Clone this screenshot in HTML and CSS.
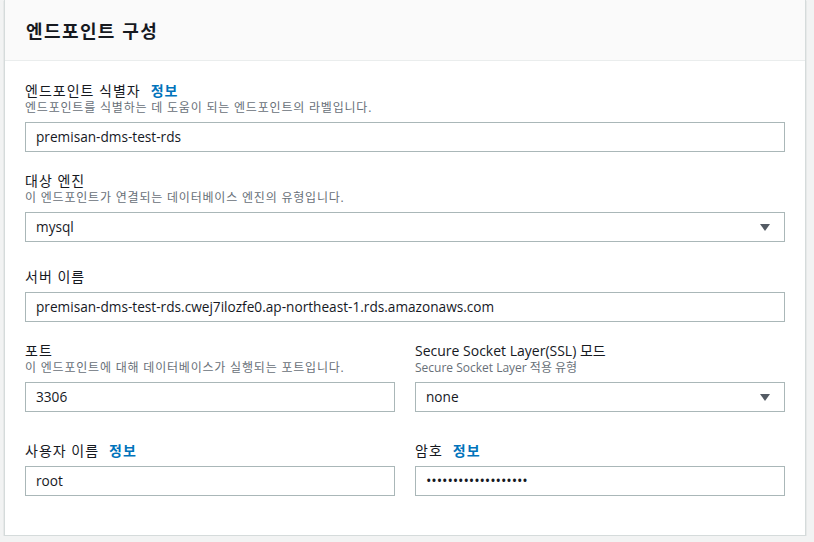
FILE: index.html
```html
<!DOCTYPE html>
<html lang="ko">
<head>
<meta charset="utf-8">
<link rel="stylesheet" href="styles.css">
</head>
<body>
<div class="card">
  <div class="card-header">
    <h2 class="title">엔드포인트 구성</h2>
  </div>
  <div class="card-body">
    <div class="field f1">
      <div class="label"><span class="ko">엔드포인트 식별자</span><a class="info">정보</a></div>
      <div class="desc ko">엔드포인트를 식별하는 데 도움이 되는 엔드포인트의 라벨입니다.</div>
      <div class="input">premisan-dms-test-rds</div>
    </div>
    <div class="field f2">
      <div class="label"><span class="ko">대상 엔진</span></div>
      <div class="desc ko">이 엔드포인트가 연결되는 데이터베이스 엔진의 유형입니다.</div>
      <div class="input select">mysql<span class="caret"></span></div>
    </div>
    <div class="field f3">
      <div class="label"><span class="ko">서버 이름</span></div>
      <div class="input">premisan-dms-test-rds.cwej7ilozfe0.ap-northeast-1.rds.amazonaws.com</div>
    </div>
    <div class="row r1">
      <div class="field">
        <div class="label"><span class="ko">포트</span></div>
        <div class="desc ko">이 엔드포인트에 대해 데이터베이스가 실행되는 포트입니다.</div>
        <div class="input">3306</div>
      </div>
      <div class="field">
        <div class="label">Secure Socket Layer(SSL) 모드</div>
        <div class="desc">Secure Socket Layer 적용 유형</div>
        <div class="input select">none<span class="caret"></span></div>
      </div>
    </div>
    <div class="row r2">
      <div class="field">
        <div class="label"><span class="ko">사용자 이름</span><a class="info">정보</a></div>
        <div class="input">root</div>
      </div>
      <div class="field">
        <div class="label"><span class="ko">암호</span><a class="info">정보</a></div>
        <div class="input password">•••••••••••••••••••</div>
      </div>
    </div>
  </div>
</div>
</body>
</html>
```

FILE: styles.css
```css
* { box-sizing: border-box; }
html, body {
  margin: 0;
  padding: 0;
  background: #f2f3f3;
  font-family: "Open Sans", "Noto Sans CJK KR", sans-serif;
  color: #16191f;
}
.card {
  margin-left: 4px;
  width: 802px;
  background: #ffffff;
  border: 1px solid #d5dbdb;
  border-top: none;
  box-shadow: 0 1px 1px rgba(0, 28, 36, 0.25);
}
.card-header {
  background: #fafafa;
  border-bottom: 1px solid #eaeded;
  padding: 19px 20px 19px 21px;
}
.title {
  margin: 0;
  font-size: 18px;
  line-height: 22px;
  font-weight: 700;
  letter-spacing: 1.4px;
  font-family: "Noto Sans CJK KR", sans-serif;
}
.card-body {
  padding: 21px 20px 39px 20px;
  display: flex;
  flex-direction: column;
}
.field {
  display: flex;
  flex-direction: column;
}
.f2 { margin-top: 20px; }
.f3 { margin-top: 26px; }
.r1 { margin-top: 20px; }
.r2 { margin-top: 30px; }
.row {
  display: grid;
  grid-template-columns: 1fr 1fr;
  gap: 20px;
}
.label {
  font-size: 14px;
  line-height: 18px;
}
.label .ko { letter-spacing: 1px; }
.info {
  color: #0073bb;
  font-weight: 700;
  letter-spacing: 1px;
  margin-left: 10px;
}
.desc {
  font-size: 12px;
  line-height: 16px;
  color: #687078;
}
.desc.ko { letter-spacing: 0.8px; }
.input {
  margin-top: 6px;
  height: 30px;
  border: 1px solid #aab7b8;
  padding: 0 10px;
  font-size: 13.65px;
  line-height: 28px;
  color: #16191f;
  background: #fff;
  position: relative;
  white-space: nowrap;
}
.select .caret {
  position: absolute;
  right: 14px;
  top: 11px;
  width: 0;
  height: 0;
  border-left: 5px solid transparent;
  border-right: 5px solid transparent;
  border-top: 7px solid #545b64;
}
.password {
  font-size: 14.5px;
  letter-spacing: -0.1px;
}
```
